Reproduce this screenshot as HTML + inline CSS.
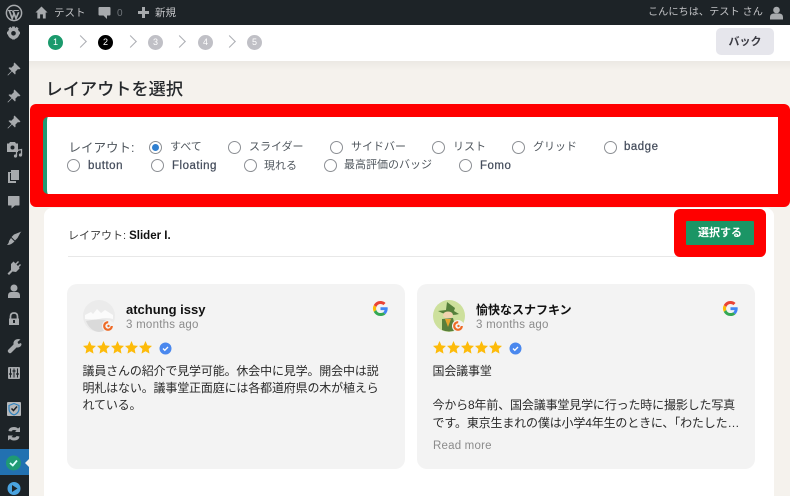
<!DOCTYPE html>
<html lang="ja">
<head>
<meta charset="utf-8">
<title>レイアウトを選択</title>
<style>
html,body{margin:0;padding:0}
body{width:790px;height:496px;overflow:hidden;position:relative;background:#f5f2ed;font-family:"Liberation Sans","Noto Sans CJK JP",sans-serif;color:#2c3338}
.a{position:absolute;white-space:nowrap}
svg{position:absolute;display:block;overflow:visible}
.step{position:absolute;top:35px;width:15px;height:15px;border-radius:50%;background:#c0c0c6;color:#fff;font-size:9px;line-height:15px;text-align:center}
.chev{position:absolute;top:37px;width:8px;height:8px}
.chev:before{content:"";position:absolute;left:-4px;top:0;width:8px;height:8px;border-top:1.7px solid #acaeb4;border-right:1.7px solid #acaeb4;transform:rotate(45deg)}
.r{position:absolute;width:11px;height:11px;border:1px solid #8c8f94;border-radius:50%;background:#fff}
.l{position:absolute;font-size:11px;line-height:14px;color:#50575e;white-space:nowrap}
.l.e{color:#454d5c;letter-spacing:.5px;font-size:11.5px;-webkit-text-stroke:.25px #454d5c}
.card{position:absolute;top:284px;width:338px;height:185px;background:#f3f3f3;border-radius:10px}
.name{position:absolute;left:59px;top:17px;font-size:13px;font-weight:bold;color:#111;white-space:nowrap;line-height:18px}
.ago{position:absolute;left:59px;top:33px;font-size:11.5px;color:#8b8b8b;white-space:nowrap;line-height:15px;letter-spacing:.25px;padding-top:1px}
.txt{position:absolute;left:15.5px;top:78.5px;width:320px;font-size:12px;line-height:17.4px;color:#2a2a2a;letter-spacing:-.16px;white-space:nowrap}
</style>
</head>
<body>

<!-- admin bar -->
<div class="a" style="left:0;top:0;width:790px;height:25px;background:#1d2327"></div>
<svg style="left:4.500px;top:3.500px" width="18" height="18" viewBox="0 0 18 18"><circle cx="9" cy="9" r="7.600" fill="none" stroke="#a7aaad" stroke-width="1.500"/><path d="M3 6.500h4.300M9 6.500h4.800" stroke="#a7aaad" stroke-width="1"/><path d="M4.200 6.500l3 8 1.800-5-1.300-3M8 6.500l3 8 2.700-6.300" fill="none" stroke="#a7aaad" stroke-width="1.700"/></svg>
<svg style="left:35px;top:5px" width="13" height="15" viewBox="0 0 14 15"><path d="M7 1L.5 7.500H2.500V14H5.500V9.500H8.500V14H11.500V7.500H13.500Z" fill="#a7aaad"/></svg>
<div class="a" style="left:54px;top:6px;font-size:10.500px;line-height:15px;color:#c3c4c7">テスト</div>
<svg style="left:98px;top:6px" width="13" height="14" viewBox="0 0 13 14"><path d="M1.500 1H11.500Q12.500 1 12.500 2V8.500Q12.500 9.500 11.500 9.500H9V13L5.500 9.500H1.500Q.5 9.500 .5 8.500V2Q.5 1 1.500 1Z" fill="#a7aaad"/></svg>
<div class="a" style="left:117px;top:6px;font-size:10px;line-height:15px;color:#70757a">0</div>
<svg style="left:138px;top:7px" width="11" height="11" viewBox="0 0 11 11"><path d="M4 0H7V4H11V7H7V11H4V7H0V4H4Z" fill="#a7aaad"/></svg>
<div class="a" style="left:155px;top:6px;font-size:10.500px;line-height:15px;color:#c3c4c7">新規</div>
<div class="a" style="left:648px;top:5px;font-size:10.200px;line-height:15px;color:#c3c4c7">こんにちは、テスト さん</div>
<svg style="left:770px;top:6px" width="13" height="14" viewBox="0 0 13 14"><circle cx="6.500" cy="4" r="3.300" fill="#a7aaad"/><path d="M0 13.500V11Q0 8 3.500 7.500H9.500Q13 8 13 11V13.500Z" fill="#a7aaad"/></svg>

<!-- sidebar -->
<div class="a" style="left:0;top:25px;width:28.500px;height:471px;background:#1d2327"></div>
<div class="a" style="left:0;top:449px;width:28.500px;height:26px;background:#2271b1"></div>
<svg style="left:25px;top:458px" width="4" height="10" viewBox="0 0 4 10"><path d="M4 1L0 5L4 9Z" fill="#f5f2ed"/></svg>
<svg width="29" height="496" style="left:0;top:0" viewBox="0 0 29 496">
<defs>
<path id="pin" d="M8 1L14 7L12.500 8L11.500 7.500L8.800 10.200Q9.500 12 8.500 13L5.500 10L1.500 14L1 13.500L5 9.500L2 6.500Q3 5.500 4.800 6.200L7.500 3.500L7 2.500Z" fill="#a7aaad"/>
</defs>
<g fill="#a7aaad">
<!-- gear -->
<path fill-rule="evenodd" d="M13.500 27.500a5.800 5.800 0 1 0 .01 0zM13.500 31a2.300 2.300 0 1 1-.01 0z"/>
<path d="M12.100 26.500h2.800v2.500h-2.800zM12.100 37h2.800v2.500h-2.800zM7 31.600h2.500v2.800H7zM17.500 31.600H20v2.800h-2.500zM8.300 28.800l2-2 1.500 1.500-2 2zM16.700 37.200l2-2-1.500-1.500-2 2zM18.700 28.800l-2-2-1.500 1.500 2 2zM10.300 37.200l-2-2 1.500-1.500 2 2z"/>
</g>
<use href="#pin" x="6.500" y="61.500"/>
<use href="#pin" x="6.500" y="88.500"/>
<use href="#pin" x="6.500" y="114.500"/>
<!-- translate/media -->
<path d="M7 143.500H9L10 142H15L16 143.500H18V152H7Z" fill="#a7aaad"/><circle cx="12.500" cy="147.500" r="2" fill="#1d2327"/>
<path d="M16.500 156V150.500L21.500 149.500V155" fill="none" stroke="#a7aaad" stroke-width="1.300"/><circle cx="15.500" cy="156" r="1.600" fill="#a7aaad"/><circle cx="20.500" cy="155" r="1.600" fill="#a7aaad"/>
<!-- pages -->
<path d="M11 170H19V180H16V183H8V172H11Z" fill="#a7aaad"/><path d="M10.500 173V180.500H16" fill="none" stroke="#1d2327" stroke-width="1"/>
<!-- comments -->
<path d="M8.500 196H19Q19.500 196 19.500 196.500V205Q19.500 205.500 19 205.500H15L11.500 208.500V205.500H8.500Q8 205.500 8 205V196.500Q8 196 8.500 196Z" fill="#a7aaad"/>
<!-- brush -->
<path d="M21.500 231.500L14 234.500L11.500 237L15 240.500L17.500 238L20.500 232.500Z" fill="#a7aaad"/><path d="M11 238L14.500 241.500L12 243.500Q10 245 7 245Q9 243 9 241Z" fill="#a7aaad"/>
<!-- plugin -->
<path d="M11 264L13.500 261.500L15.500 263.500L18 261L19 262L16.500 264.500L18 266L20 264L21 265L19 267L19.500 268.500L16 272L12.500 271.500L9 275L7.500 273.500L11 270Z" fill="#a7aaad"/>
<!-- user -->
<circle cx="14" cy="288" r="3.500" fill="#a7aaad"/><path d="M8 298V295.500Q8 292.500 11 292H17Q20 292.500 20 295.500V298Z" fill="#a7aaad"/>
<!-- lock -->
<path d="M10.500 319V316.500Q10.500 313 14 313Q17.500 313 17.500 316.500V319" fill="none" stroke="#a7aaad" stroke-width="1.700"/><path d="M9 318.500H19V325H9Z" fill="#a7aaad"/><rect x="13" y="320" width="2" height="3" fill="#1d2327"/>
<!-- wrench -->
<path d="M20.500 339.500L17.500 342L18.500 344L21 343L21.500 344.500Q21 347 18 347.500L16.500 347.500L11.500 352.500Q10 354 8.500 352.500Q7 351 8.500 349.500L13.500 344.500V342.500Q14.500 339 18.500 339Z" fill="#a7aaad"/>
<!-- settings -->
<rect x="8" y="367" width="12" height="12" rx="1" fill="#a7aaad"/><path d="M10.500 368.500V377.500M14 368.500V377.500M17.500 368.500V377.500" stroke="#1d2327" stroke-width="1"/><path d="M9 374H12M12.500 371H15.500M16 374H19" stroke="#1d2327" stroke-width="1.300"/>
<!-- shield -->
<rect x="7" y="402" width="14" height="14" rx="1" fill="#b6b8ba"/><path d="M14 403.500L19 405.500V409Q19 413 14 415Q9 413 9 409V405.500Z" fill="none" stroke="#2f83c0" stroke-width="1.200"/><path d="M11.500 408.500L13.500 410.500L17 406.500" fill="none" stroke="#1d2327" stroke-width="1.500"/>
<!-- sync -->
<path d="M8.500 431Q9 427 14 427Q16.500 427 18 428.500L20 427V432H15L16.500 430.500Q15.500 430 14 430Q12 430 11.500 431.500Z" fill="#a7aaad"/>
<path d="M19.500 436.500Q19 440.500 14 440.500Q11.500 440.500 10 439L8 440.500V435.500H13L11.500 437Q12.500 437.500 14 437.500Q16 437.500 16.500 436Z" fill="#a7aaad"/>
<!-- active -->
<circle cx="13.500" cy="463" r="7.500" fill="#1f9a74"/>
<path d="M10 463L12.800 465.500L17 460.500" fill="none" stroke="#dff" stroke-width="1.800"/>
<!-- play -->
<circle cx="14" cy="488.500" r="6.500" fill="#4aa3df"/><path d="M12 485V492L17.500 488.500Z" fill="#1d2327"/>
</svg>

<!-- top wizard bar -->
<div class="a" style="left:28.500px;top:25px;width:762px;height:36px;background:#fff"></div>
<div class="a" style="left:28.500px;top:61px;width:762px;height:10px;background:linear-gradient(#ebe8e3,#f5f2ed)"></div>
<div class="step" style="left:48px;background:#1b9a6c">1</div>
<div class="chev" style="left:80px"></div>
<div class="step" style="left:98px;background:#000">2</div>
<div class="chev" style="left:130px"></div>
<div class="step" style="left:148px">3</div>
<div class="chev" style="left:179px"></div>
<div class="step" style="left:198px">4</div>
<div class="chev" style="left:229px"></div>
<div class="step" style="left:247px">5</div>
<div class="a" style="left:716px;top:28px;width:58px;height:27px;background:#e6e6ec;border-radius:5px;text-align:center;font-size:11px;font-weight:bold;line-height:28px;color:#3c3c44">バック</div>

<div class="a" style="left:45.500px;top:78px;font-size:17.200px;font-weight:500;line-height:22px;color:#26292c">レイアウトを選択</div>

<!-- filter box -->
<div class="a" style="left:30px;top:104px;width:760px;height:103px;background:#f00;border-radius:6px"></div>
<div class="a" style="left:43px;top:117px;width:731px;height:77px;background:#fff;border-left:4px solid #1f9a74;border-radius:5px 0 0 5px"></div>

<div class="l" style="left:68.500px;top:141px;font-size:12.500px">レイアウト:</div>

<div class="r" style="left:149px;top:141px;border-color:#8c8f94"></div>
<div class="a" style="left:152px;top:144px;width:7px;height:7px;border-radius:50%;background:#2f7fd0"></div>
<div class="l" style="left:170px;top:140px">すべて</div>
<div class="r" style="left:228px;top:141px"></div>
<div class="l" style="left:249px;top:140px">スライダー</div>
<div class="r" style="left:330px;top:141px"></div>
<div class="l" style="left:351px;top:140px">サイドバー</div>
<div class="r" style="left:432px;top:141px"></div>
<div class="l" style="left:453px;top:140px">リスト</div>
<div class="r" style="left:512px;top:141px"></div>
<div class="l" style="left:533px;top:140px">グリッド</div>
<div class="r" style="left:604px;top:141px"></div>
<div class="l e" style="left:624px;top:140px">badge</div>

<div class="r" style="left:67px;top:159px"></div>
<div class="l e" style="left:88px;top:159px">button</div>
<div class="r" style="left:151px;top:159px"></div>
<div class="l e" style="left:172px;top:159px">Floating</div>
<div class="r" style="left:244px;top:159px"></div>
<div class="l" style="left:264px;top:159px">現れる</div>
<div class="r" style="left:324px;top:159px"></div>
<div class="l" style="left:344px;top:158px">最高評価のバッジ</div>
<div class="r" style="left:459px;top:159px"></div>
<div class="l e" style="left:480px;top:159px">Fomo</div>

<!-- main panel -->
<div class="a" style="left:44px;top:208px;width:730px;height:288px;background:#fff;border-radius:8px 8px 0 0"></div>
<div class="a" style="left:68px;top:229px;font-size:11px;line-height:15px;color:#3c3c3c">レイアウト: <b style="color:#111;font-size:11.500px">Slider I.</b></div>
<div class="a" style="left:68px;top:256px;width:682px;height:1px;background:#e8e8e8"></div>
<div class="a" style="left:674px;top:209px;width:92px;height:48px;background:#f00;border-radius:6px"></div>
<div class="a" style="left:686px;top:221px;width:68px;height:24px;background:#1b9565;border-radius:1px;color:#fff;font-size:11px;font-weight:bold;line-height:24px;text-align:center">選択する</div>

<!-- card 1 -->
<div class="card" style="left:67px">
  <svg style="left:16px;top:16px" width="32" height="32" viewBox="0 0 32 32">
    <circle cx="16" cy="16" r="16" fill="#ebebeb"/>
    <path d="M2 15L8 12L10 14L14 9L18 13L22 10L30 15V19Q23 17 16 19Q9 20 2 19Z" fill="#fbfbfb"/>
    <path d="M3 21Q16 18 29 21Q25 31 16 32Q7 31 3 21Z" fill="#dadada"/>
    <circle cx="25" cy="26" r="6" fill="#f3f3f3"/><circle cx="25" cy="26" r="3.800" fill="none" stroke="#ee6a26" stroke-width="2.200" stroke-dasharray="18 6"/><circle cx="25.500" cy="26" r="1.200" fill="#ee6a26"/>
  </svg>
  <div class="name">atchung issy</div>
  <div class="ago">3 months ago</div>
  <svg style="left:306px;top:17px" width="15" height="15" viewBox="0 0 48 48"><path fill="#EA4335" d="M24 9.500c3.500 0 6.700 1.200 9.200 3.600l6.900-6.900C35.900 2.400 30.500 0 24 0 14.600 0 6.500 5.400 2.600 13.200l8 6.200C12.400 13.700 17.700 9.500 24 9.500z"/><path fill="#4285F4" d="M47 24.500c0-1.600-.2-3.100-.4-4.500H24v9h12.900c-.6 3-2.200 5.500-4.700 7.200l7.700 6C44.400 38 47 31.800 47 24.500z"/><path fill="#FBBC05" d="M10.500 28.600A14.500 14.500 0 0 1 10.500 19.400l-8-6.200a24 24 0 0 0 0 21.600z"/><path fill="#34A853" d="M24 48c6.500 0 11.900-2.100 15.900-5.800l-7.700-6c-2.200 1.400-4.900 2.300-8.200 2.300-6.300 0-11.600-4.200-13.500-9.900l-8 6.200C6.500 42.600 14.600 48 24 48z"/></svg>
  <svg style="left:16px;top:57px" width="70" height="13" viewBox="0 0 70 13"><defs><path id="s" d="M6.500 0L8.400 4.400L13 4.900L9.600 8L10.500 12.600L6.500 10.300L2.500 12.600L3.400 8L0 4.900L4.600 4.400Z" fill="#fdbb0a"/></defs><use href="#s"/><use href="#s" x="14"/><use href="#s" x="28"/><use href="#s" x="42"/><use href="#s" x="56"/></svg>
  <svg style="left:92px;top:58px" width="13" height="13" viewBox="0 0 13 13"><circle cx="6.500" cy="6.500" r="6" fill="#4a88ee"/><path d="M4 6.500L5.800 8.300L9 5" fill="none" stroke="#fff" stroke-width="1.300"/></svg>
  <div class="txt">議員さんの紹介で見学可能。休会中に見学。開会中は説<br>明札はない。議事堂正面庭には各都道府県の木が植えら<br>れている。</div>
</div>

<!-- card 2 -->
<div class="card" style="left:417px">
  <svg style="left:16px;top:16px" width="32" height="32" viewBox="0 0 32 32">
    <circle cx="16" cy="16" r="16" fill="#cde09c"/>
    <path d="M5 11L13 10L14 2L22 8L21 11L26 14Q16 17 5 11Z" fill="#55803a"/>
    <ellipse cx="15" cy="15" rx="5" ry="3.500" fill="#f0d3ae"/>
    <path d="M9 19L20 18L23 30Q16 33 9 30Z" fill="#587f3c"/>
    <path d="M12 19L18 19L15 27Z" fill="#e4a52e"/>
    <circle cx="25" cy="26" r="6" fill="#f3f3f3"/><circle cx="25" cy="26" r="3.800" fill="none" stroke="#ee6a26" stroke-width="2.200" stroke-dasharray="18 6"/><circle cx="25.500" cy="26" r="1.200" fill="#ee6a26"/>
  </svg>
  <div class="name" style="font-size:12px">愉快なスナフキン</div>
  <div class="ago">3 months ago</div>
  <svg style="left:306px;top:17px" width="15" height="15" viewBox="0 0 48 48"><path fill="#EA4335" d="M24 9.500c3.500 0 6.700 1.200 9.200 3.600l6.900-6.900C35.900 2.400 30.500 0 24 0 14.600 0 6.500 5.400 2.600 13.200l8 6.200C12.400 13.700 17.700 9.500 24 9.500z"/><path fill="#4285F4" d="M47 24.500c0-1.600-.2-3.100-.4-4.500H24v9h12.900c-.6 3-2.200 5.500-4.700 7.200l7.700 6C44.400 38 47 31.800 47 24.500z"/><path fill="#FBBC05" d="M10.500 28.600A14.500 14.500 0 0 1 10.500 19.400l-8-6.200a24 24 0 0 0 0 21.600z"/><path fill="#34A853" d="M24 48c6.500 0 11.900-2.100 15.900-5.800l-7.700-6c-2.200 1.400-4.900 2.300-8.200 2.300-6.300 0-11.600-4.200-13.500-9.900l-8 6.200C6.500 42.600 14.600 48 24 48z"/></svg>
  <svg style="left:16px;top:57px" width="70" height="13" viewBox="0 0 70 13"><use href="#s"/><use href="#s" x="14"/><use href="#s" x="28"/><use href="#s" x="42"/><use href="#s" x="56"/></svg>
  <svg style="left:92px;top:58px" width="13" height="13" viewBox="0 0 13 13"><circle cx="6.500" cy="6.500" r="6" fill="#4a88ee"/><path d="M4 6.500L5.800 8.300L9 5" fill="none" stroke="#fff" stroke-width="1.300"/></svg>
  <div class="txt">国会議事堂<br><br>今から8年前、国会議事堂見学に行った時に撮影した写真<br>です。東京生まれの僕は小学4年生のときに、「わたした…</div>
  <div class="a" style="left:16px;top:154px;font-size:11.500px;line-height:16px;color:#8b8b8b;letter-spacing:.2px">Read more</div>
</div>

</body>
</html>
